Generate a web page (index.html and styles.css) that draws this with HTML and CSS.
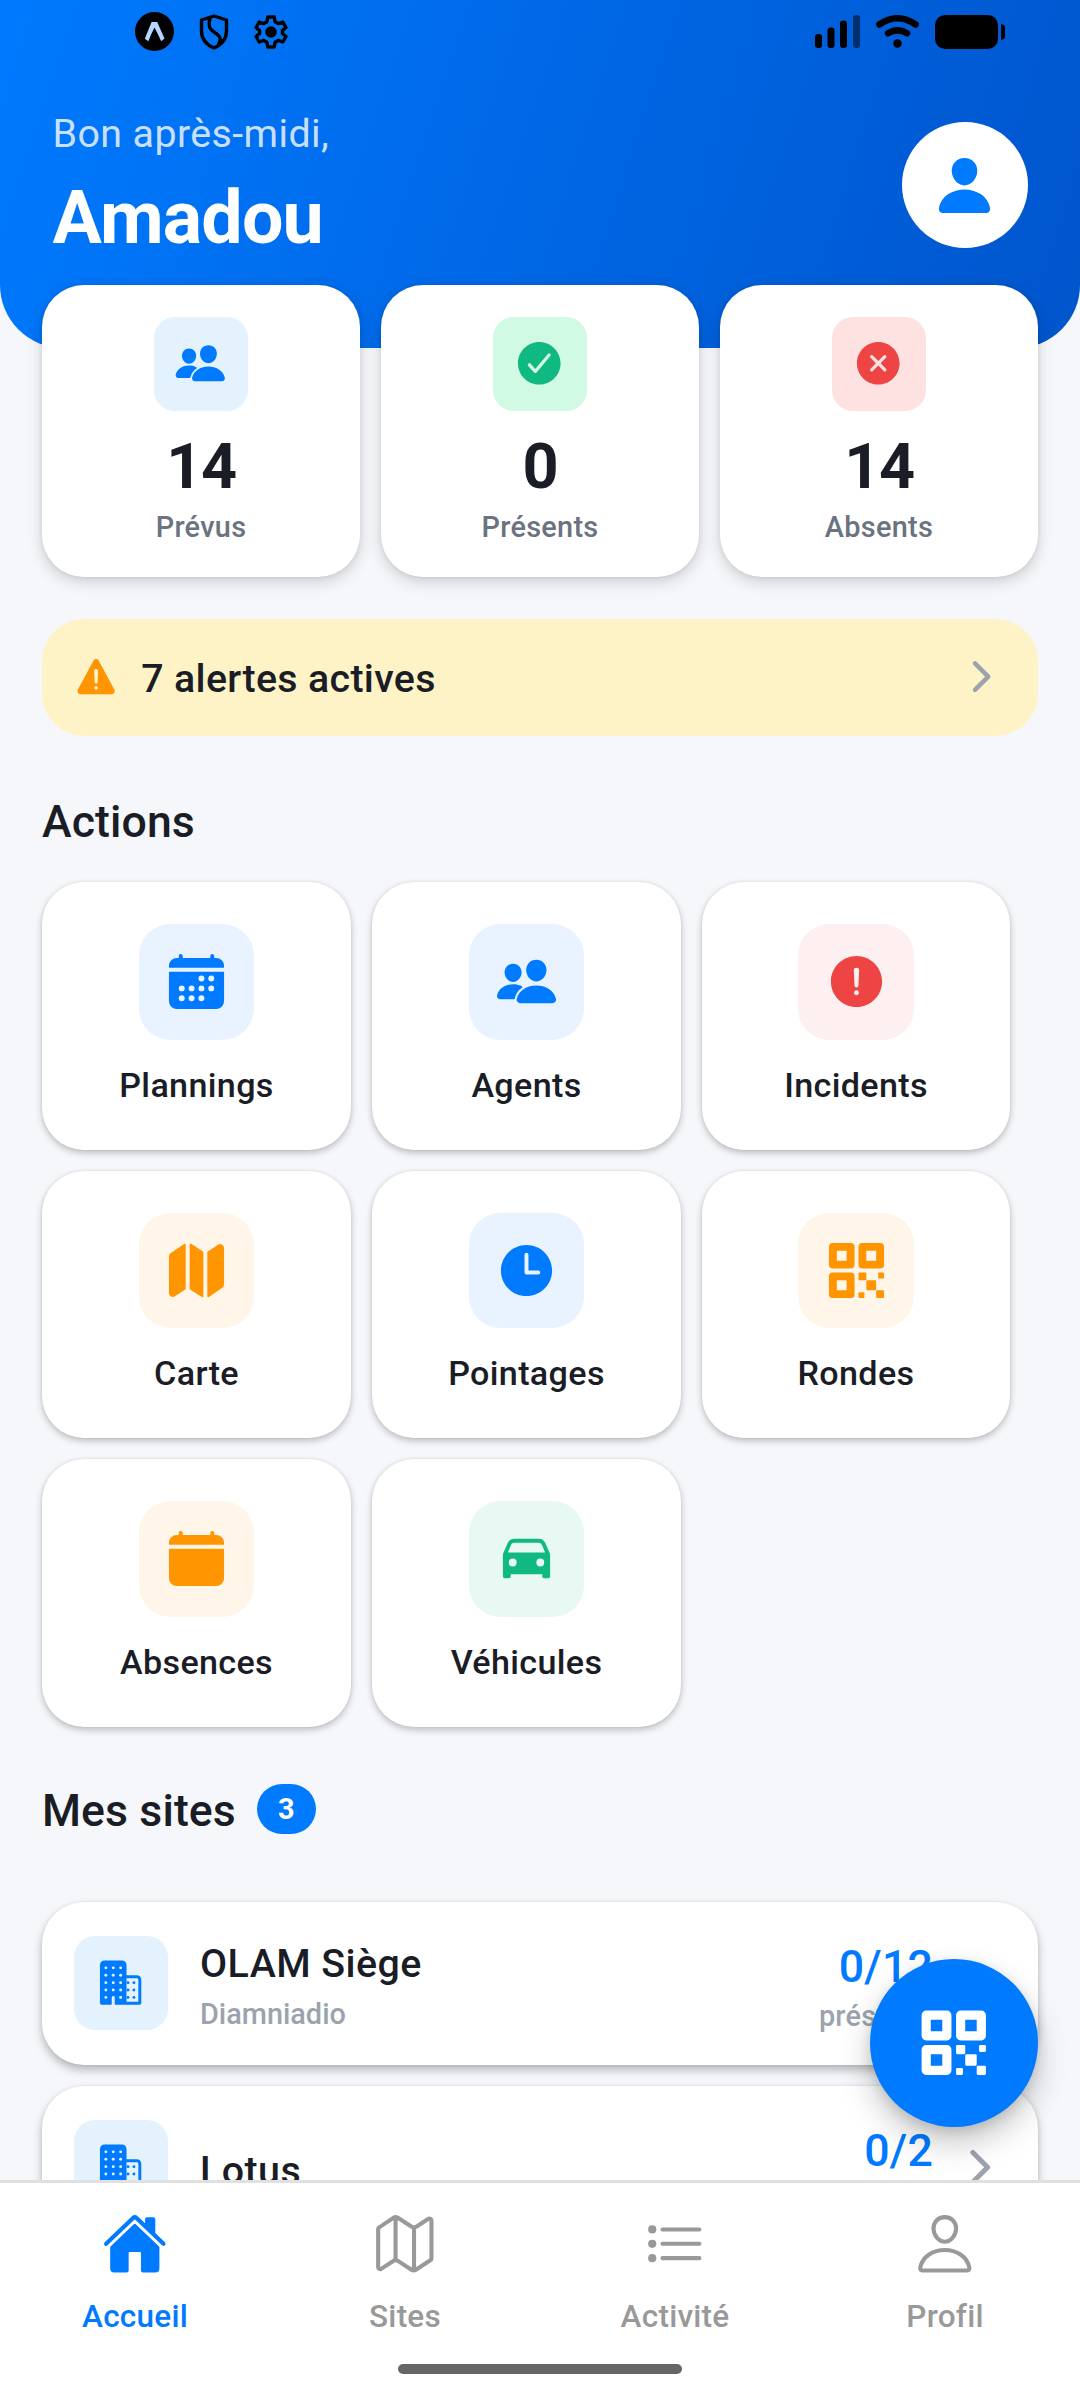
FILE: index.html
```html
<!DOCTYPE html>
<html lang="fr">
<head>
<meta charset="utf-8">
<title>Accueil</title>
<link rel="stylesheet" href="styles.css">
</head>
<body>
<svg class="sprite" aria-hidden="true">
  <symbol id="people" viewBox="0 0 512 512"><path d="M336 256c-20.56 0-40.56-9.18-56.32-25.84-15.13-16.25-24.37-37.92-26-61-1.74-24.62 5.77-47.26 21.14-63.76S312 80 336 80c23.83 0 45.38 9.06 60.7 25.52 15.47 16.62 23 39.22 21.26 63.63-1.67 23.11-10.9 44.77-26 61C376.22 246.82 356.22 256 336 256zM467.83 432H204.18a27.71 27.71 0 01-22-10.67 30.22 30.22 0 01-5.26-25.79c8.42-33.81 29.28-61.85 60.32-81.08C264.79 297.4 299.86 288 336 288c36.85 0 71 9 98.71 26.05 31.11 19.13 52 47.33 60.38 81.55a30.27 30.27 0 01-5.32 25.78A27.68 27.68 0 01467.83 432zM147 260c-35.19 0-66.13-32.72-69-72.93-1.42-20.6 5-39.65 18-53.62 12.86-13.83 31-21.45 51-21.45s38 7.66 50.93 21.57c13.1 14.08 19.5 33.09 18 53.52-2.87 40.2-33.8 72.91-68.93 72.91zM212.66 291.45c-17.59-8.6-40.42-12.9-65.65-12.9-29.46 0-58.07 7.68-80.57 21.62-25.51 15.83-42.67 38.88-49.6 66.71a27.39 27.39 0 004.79 23.36A25.32 25.32 0 0041.72 400h111a8 8 0 007.87-6.57c.11-.63.25-1.26.41-1.88 8.48-34.06 28.35-62.84 57.71-83.82a8 8 0 00-.63-13.39c-1.57-.92-3.37-1.89-5.42-2.89z"/></symbol>
  <symbol id="person" viewBox="0 0 512 512"><path d="M332.64 64.58C313.18 43.57 286 32 256 32c-30.16 0-57.43 11.5-76.8 32.38-19.58 21.11-29.12 49.8-26.88 80.78C156.76 206.28 203.27 256 256 256s99.16-49.71 103.67-110.82c2.27-30.7-7.33-59.33-27.03-80.6zM432 480H80A31 31 0 0155.8 468.87c-6.5-7.77-9.12-18.38-7.18-29.11C57.06 392.94 83.4 353.61 124.8 326c36.78-24.51 83.37-38 131.2-38s94.42 13.5 131.2 38c41.4 27.6 67.74 66.93 76.18 113.75 1.94 10.73-.68 21.34-7.18 29.11A31 31 0 01432 480z"/></symbol>
  <symbol id="check" viewBox="0 0 512 512"><path d="M256 48C141.31 48 48 141.31 48 256s93.31 208 208 208 208-93.31 208-208S370.69 48 256 48zm108.25 138.29l-134.4 160a16 16 0 01-12 5.71h-.27a16 16 0 01-11.89-5.3l-57.6-64a16 16 0 1123.78-21.4l45.29 50.32 122.59-145.91a16 16 0 0124.5 20.58z"/></symbol>
  <symbol id="close" viewBox="0 0 512 512"><path d="M256 48C141.31 48 48 141.31 48 256s93.31 208 208 208 208-93.31 208-208S370.69 48 256 48zm75.31 260.69a16 16 0 11-22.62 22.62L256 278.63l-52.69 52.68a16 16 0 01-22.62-22.62L233.37 256l-52.68-52.69a16 16 0 0122.62-22.62L256 233.37l52.69-52.68a16 16 0 0122.62 22.62L278.63 256z"/></symbol>
  <symbol id="alert" viewBox="0 0 512 512"><path d="M256 48C141.31 48 48 141.31 48 256s93.31 208 208 208 208-93.31 208-208S370.69 48 256 48zm0 319.91a20 20 0 1120-20 20 20 0 01-20 20zm21.72-201.15l-5.74 122a16 16 0 01-32 0l-5.74-121.94v-.05a21.74 21.74 0 1143.44 0z"/></symbol>
  <symbol id="warning" viewBox="0 0 512 512"><path d="M449.07,399.08,278.64,82.58c-12.08-22.44-44.26-22.44-56.35,0L51.87,399.08A32,32,0,0,0,80,446.25H420.89A32,32,0,0,0,449.07,399.08Zm-198.6-1.83a20,20,0,1,1,20-20A20,20,0,0,1,250.47,397.25ZM272.19,196.1l-5.74,122a16,16,0,0,1-32,0l-5.74-121.95v0a21.73,21.73,0,0,1,21.5-22.69h.21a21.74,21.74,0,0,1,21.73,22.7Z"/></symbol>
  <symbol id="chevron" viewBox="0 0 512 512"><path class="line bold" d="M184 112l144 144-144 144"/></symbol>
  <symbol id="calendar-clear" viewBox="0 0 512 512"><path d="M480 128a64 64 0 00-64-64h-16V48.45c0-8.61-6.62-16-15.23-16.43A16 16 0 00368 48v16H144V48.45c0-8.61-6.62-16-15.23-16.43A16 16 0 00112 48v16H96a64 64 0 00-64 64v12a4 4 0 004 4h440a4 4 0 004-4zM32 416a64 64 0 0064 64h320a64 64 0 0064-64V179a3 3 0 00-3-3H35a3 3 0 00-3 3z"/></symbol>
  <symbol id="calendar" viewBox="0 0 512 512"><use href="#calendar-clear"/><g fill="#E8F3FF"><circle cx="296" cy="232" r="24"/><circle cx="376" cy="232" r="24"/><circle cx="136" cy="312" r="24"/><circle cx="216" cy="312" r="24"/><circle cx="296" cy="312" r="24"/><circle cx="376" cy="312" r="24"/><circle cx="136" cy="392" r="24"/><circle cx="216" cy="392" r="24"/><circle cx="296" cy="392" r="24"/></g></symbol>
  <symbol id="map" viewBox="0 0 512 512"><path d="M48.17 113.34A32 32 0 0032 141.24V438a32 32 0 0047 28.37c.43-.23.85-.47 1.26-.74l84.14-55.05a8 8 0 003.63-6.72V46.45a8 8 0 00-12.51-6.63zM212.36 39.31A8 8 0 00200 46v357.56a8 8 0 003.63 6.72l96 61.9A8 8 0 00312 465.5V107.79a8 8 0 00-3.64-6.73zM464.53 46.47a31.64 31.64 0 00-31.5-.88 12.07 12.07 0 00-1.25.74l-84.15 55a8 8 0 00-3.63 6.72v357.46a8 8 0 0012.52 6.63l107.07-73.46a32 32 0 0016.41-28v-296a32.76 32.76 0 00-15.47-28.21z"/></symbol>
  <symbol id="map-outline" viewBox="0 0 512 512"><path class="line" d="M313.27 124.64L198.73 51.36a32 32 0 00-29.28.35L56.51 127.49A16 16 0 0048 141.63v295.8a16 16 0 0023.49 14.14l97.82-63.79a32 32 0 0129.5-.24l111.86 73a32 32 0 0029.27-.11l115.43-75.94a16 16 0 008.63-14.2V74.57a16 16 0 00-23.49-14.14l-98 63.86a32 32 0 01-29.24.35zM328 128v336M184 48v336"/></symbol>
  <symbol id="time" viewBox="0 0 512 512"><path d="M256 48C141.13 48 48 141.13 48 256s93.13 208 208 208 208-93.13 208-208S370.87 48 256 48zm96 240h-96a16 16 0 01-16-16V128a16 16 0 0132 0v128h80a16 16 0 010 32z"/></symbol>
  <symbol id="qr" viewBox="0 0 512 512"><rect x="336" y="336" width="80" height="80" rx="8"/><rect x="272" y="272" width="64" height="64" rx="8"/><rect x="416" y="416" width="64" height="64" rx="8"/><rect x="432" y="272" width="48" height="48" rx="8"/><rect x="272" y="432" width="48" height="48" rx="8"/><path fill-rule="evenodd" d="M304 32H448a32 32 0 0132 32V208a32 32 0 01-32 32H304a32 32 0 01-32-32V64a32 32 0 0132-32zM336 96v80h80V96zM64 32H208a32 32 0 0132 32V208a32 32 0 01-32 32H64a32 32 0 01-32-32V64a32 32 0 0132-32zM96 96v80h80V96zM64 272H208a32 32 0 0132 32V448a32 32 0 01-32 32H64a32 32 0 01-32-32V304a32 32 0 0132-32zM96 336v80h80v-80z"/></symbol>
  <symbol id="car" viewBox="0 0 512 512"><path d="M447.68 220.78a16 16 0 00-1-3.08l-37.78-88.16C400.19 109.17 379 96 354.89 96H157.11c-24.09 0-45.3 13.17-54 33.54L65.29 217.7A15.72 15.72 0 0064 224v176a16 16 0 0016 16h32a16 16 0 0016-16v-16h256v16a16 16 0 0016 16h32a16 16 0 0016-16V224a16.15 16.15 0 00-.32-3.22zM144 320a32 32 0 1132-32 32 32 0 01-32 32zm224 0a32 32 0 1132-32 32 32 0 01-32 32zM104.26 208l28.23-65.85C136.11 133.69 146 128 157.09 128h197.8c11.1 0 21 5.69 24.62 14.15L407.74 208z"/></symbol>
  <symbol id="business" viewBox="0 0 512 512"><path fill-rule="evenodd" d="M432 176H320V64a48 48 0 00-48-48H80a48 48 0 00-48 48v416a16 16 0 0016 16h104a8 8 0 008-8v-71.55c0-8.61 6.62-16 15.23-16.43A16 16 0 01192 416v72a8 8 0 008 8h264a16 16 0 0016-16V224a48 48 0 00-48-48zM320 208H432a16 16 0 0116 16V464H320z"/><g><circle cx="400" cy="256" r="16"/><circle cx="400" cy="336" r="16"/><circle cx="400" cy="416" r="16"/><circle cx="336" cy="256" r="16"/><circle cx="336" cy="336" r="16"/><circle cx="336" cy="416" r="16"/></g><g fill="#E3F2FD"><circle cx="96" cy="96" r="16"/><circle cx="176" cy="96" r="16"/><circle cx="256" cy="96" r="16"/><circle cx="96" cy="176" r="16"/><circle cx="176" cy="176" r="16"/><circle cx="256" cy="176" r="16"/><circle cx="96" cy="256" r="16"/><circle cx="176" cy="256" r="16"/><circle cx="256" cy="256" r="16"/><circle cx="96" cy="336" r="16"/><circle cx="176" cy="336" r="16"/><circle cx="256" cy="336" r="16"/><circle cx="96" cy="416" r="16"/><circle cx="256" cy="416" r="16"/></g></symbol>
  <symbol id="home" viewBox="0 0 512 512"><path d="M261.56 101.28a8 8 0 00-11.06 0L66.4 277.15a8 8 0 00-2.47 5.79L63.9 448a32 32 0 0032 32H192a16 16 0 0016-16V328a8 8 0 018-8h80a8 8 0 018 8v136a16 16 0 0016 16h96.06a32 32 0 0032-32V282.94a8 8 0 00-2.47-5.79z"/><path d="M490.91 244.15l-74.8-71.56V64a16 16 0 00-16-16h-48a16 16 0 00-16 16v32l-57.92-55.38C272.77 35.14 264.71 32 256 32c-8.68 0-16.72 3.14-22.14 8.63l-212.7 203.5c-6.22 6-7 15.87-1.34 22.37A16 16 0 0043 267.56L250.5 69.28a8 8 0 0111.06 0l207.52 198.28a16 16 0 0022.59-.44c6.14-6.36 5.63-16.86-.76-22.97z"/></symbol>
  <symbol id="list" viewBox="0 0 512 512"><path class="line" d="M160 144h288M160 256h288M160 368h288"/><circle cx="80" cy="144" r="32"/><circle cx="80" cy="256" r="32"/><circle cx="80" cy="368" r="32"/></symbol>
  <symbol id="person-outline" viewBox="0 0 512 512"><path class="line" d="M344 144c-3.92 52.87-44 96-88 96s-84.15-43.12-88-96c-4-55 35-96 88-96s92 42 88 96zM256 304c-87 0-175.3 48-191.64 138.6C62.39 453.52 68.57 464 80 464h352c11.44 0 17.62-10.48 15.65-21.4C431.3 352 343 304 256 304z"/></symbol>
</svg>

<div class="screen">
  <main class="content">
    <header class="hero">
      <div class="status">
        <div class="status-left">
          <svg width="39" height="39" viewBox="0 0 39 39"><circle cx="19.5" cy="19.5" r="19.5"/><path class="caret" d="M16.6 10h5.6l7.3 16.5-3.3 2.8q-3.6-8-6.7-13.8-3.1 5.800-6.100 13.800l-3.600-2.600z"/></svg>
          <svg width="30" height="36" viewBox="0 0 30 36"><path class="glyph" d="M15 2L27.500 6V17C27.500 25 23 30.500 15 34 7 30.500 2.500 25 2.500 17V6ZM11 4C8 16 14 17 18.500 20.500 22.500 24 21.500 26 19.500 31"/></svg>
          <svg width="34" height="34" viewBox="0 0 34 34"><path class="glyph" d="M13.800 2h6.400l.9 4.700 3.200 1.900 4.500-1.600 3.200 5.500-3.600 3.100v2.800l3.600 3.100-3.200 5.500-4.500-1.600-3.200 1.900-.9 4.700h-6.400l-.9-4.700-3.200-1.900-4.500 1.600L2 21.500l3.600-3.100v-2.800L2 12.500 5.200 7l4.500 1.600 3.200-1.900z"/><circle cx="17" cy="17" r="5.800"/></svg>
        </div>
        <div class="status-right">
          <svg width="45" height="33" viewBox="0 0 45 33"><rect y="19" width="7" height="14" rx="3"/><rect x="12.500" y="12.500" width="7" height="20.500" rx="3"/><rect x="25" y="5.500" width="7" height="27.500" rx="3"/><rect x="38" width="7" height="33" rx="3" opacity=".5"/></svg>
          <svg width="43" height="33" viewBox="0 0 43 33"><path class="wave" d="M3.300 9.500Q21.500-3 39.700 9.500M12 18.300Q21.500 12.500 31 18.300"/><circle cx="21.500" cy="28.500" r="4.200"/></svg>
          <svg width="70" height="34" viewBox="0 0 70 34"><rect width="63" height="34" rx="10"/><path d="M66 9q4 1 4 3v10q0 2-4 3z"/></svg>
        </div>
      </div>
      <div class="hello">
        <div>
          <p class="greeting">Bon après-midi,</p>
          <h1 class="name">Amadou</h1>
        </div>
        <div class="avatar"><svg class="i24"><use href="#person"/></svg></div>
      </div>
    </header>

    <section class="stats">
      <div class="card stat"><div class="tile sky"><svg class="i20"><use href="#people"/></svg></div><b>14</b><span>Prévus</span></div>
      <div class="card stat"><div class="tile mint"><svg class="i20"><use href="#check"/></svg></div><b>0</b><span>Présents</span></div>
      <div class="card stat"><div class="tile rose"><svg class="i20"><use href="#close"/></svg></div><b>14</b><span>Absents</span></div>
    </section>

    <div class="alerts"><svg class="i18"><use href="#warning"/></svg><span>7 alertes actives</span><svg class="i18 muted"><use href="#chevron"/></svg></div>

    <h2 class="title">Actions</h2>
    <section class="actions">
      <div class="card action"><div class="tile big blue"><svg class="i24"><use href="#calendar"/></svg></div><span>Plannings</span></div>
      <div class="card action"><div class="tile big blue"><svg class="i24"><use href="#people"/></svg></div><span>Agents</span></div>
      <div class="card action"><div class="tile big red"><svg class="i24"><use href="#alert"/></svg></div><span>Incidents</span></div>
      <div class="card action"><div class="tile big orange"><svg class="i24"><use href="#map"/></svg></div><span>Carte</span></div>
      <div class="card action"><div class="tile big blue"><svg class="i24"><use href="#time"/></svg></div><span>Pointages</span></div>
      <div class="card action"><div class="tile big orange"><svg class="i24"><use href="#qr"/></svg></div><span>Rondes</span></div>
      <div class="card action"><div class="tile big orange"><svg class="i24"><use href="#calendar-clear"/></svg></div><span>Absences</span></div>
      <div class="card action"><div class="tile big green"><svg class="i24"><use href="#car"/></svg></div><span>Véhicules</span></div>
    </section>

    <div class="sites-head"><h2 class="title">Mes sites</h2><span class="badge">3</span></div>
    <section class="sites">
      <div class="card site">
        <div class="tile sky"><svg class="i18"><use href="#business"/></svg></div>
        <div class="site-text"><strong>OLAM Siège</strong><span>Diamniadio</span></div>
        <div class="site-count"><strong>0/12</strong><span>présents</span></div>
        <svg class="i20 muted"><use href="#chevron"/></svg>
      </div>
      <div class="card site">
        <div class="tile sky"><svg class="i18"><use href="#business"/></svg></div>
        <div class="site-text"><strong>Lotus</strong></div>
        <div class="site-count"><strong>0/2</strong></div>
        <svg class="i20 muted"><use href="#chevron"/></svg>
      </div>
    </section>
  </main>

  <nav class="tabs">
    <div class="tab active"><svg class="i25"><use href="#home"/></svg><span>Accueil</span></div>
    <div class="tab"><svg class="i25"><use href="#map-outline"/></svg><span>Sites</span></div>
    <div class="tab"><svg class="i25"><use href="#list"/></svg><span>Activité</span></div>
    <div class="tab"><svg class="i25"><use href="#person-outline"/></svg><span>Profil</span></div>
    <div class="home-bar"></div>
  </nav>
  <div class="fab"><svg class="i28"><use href="#qr"/></svg></div>
</div>
</body>
</html>
```
FILE: styles.css
```css
* { box-sizing: border-box; margin: 0; padding: 0; }
body { font-family: Roboto, "Noto Sans", sans-serif; color: #1a1d26; background: #f5f7fb; }
svg { display: block; flex: none; fill: currentColor; }
.sprite { position: absolute; width: 0; height: 0; }
.line { fill: none; stroke: currentColor; stroke-width: 32; stroke-linecap: round; stroke-linejoin: round; }
.bold { stroke-width: 48; }
.i18 { width: 47.25px; height: 47.25px; }
.i20 { width: 52.5px; height: 52.5px; }
.i24 { width: 63px; height: 63px; }
.i25 { width: 65.6px; height: 65.6px; }
.i28 { width: 73.5px; height: 73.5px; }
.muted { color: #9ca3af; }

.screen { position: relative; width: 1080px; height: 2400px; overflow: hidden; display: flex; flex-direction: column; }
.content { flex: 1; min-height: 0; overflow: hidden; }

.hero { height: 348px; border-radius: 0 0 63px 63px; background: linear-gradient(107.9deg, #007aff, #0055cc); }
.status { height: 63px; display: flex; justify-content: space-between; align-items: center; padding: 0 75px 0 135px; color: #000; }
.status-left { display: flex; align-items: center; gap: 25px; }
.status-right { display: flex; align-items: center; gap: 16px; }
.caret { fill: #b5d6ff; }
.glyph { fill: none; stroke: #000; stroke-width: 3.4; stroke-linejoin: round; }
.wave { fill: none; stroke: #000; stroke-width: 6.5; stroke-linecap: round; }
.hello { display: flex; justify-content: space-between; align-items: center; height: 244px; padding: 0 52.5px; }
.greeting { font-size: 39.375px; line-height: 53px; letter-spacing: .4px; color: rgba(255,255,255,.8); }
.name { font-size: 73.5px; line-height: 98px; font-weight: 700; letter-spacing: -.8px; color: #fff; margin-top: 9px; }
.hello > div:first-child { padding-top: 4px; }
.avatar { width: 126px; height: 126px; border-radius: 50%; background: #fff; color: #007aff; display: grid; place-items: center; }

.card { background: #fff; border-radius: 42px; box-shadow: 0 3px 7px rgba(0,0,0,.23), 0 0 3px rgba(0,0,0,.08); }
.tile { width: 94.5px; height: 94.5px; border-radius: 21px; display: grid; place-items: center; flex: none; }
.big { width: 115.5px; height: 115.5px; border-radius: 31.5px; }
.sky { background: #e3f2fd; color: #007aff; }
.mint { background: #d1fae5; color: #10b981; }
.rose { background: #fee2e2; color: #ef4444; }
.blue { background: #e8f3ff; color: #007aff; }
.red { background: #feeff0; color: #ef4444; }
.orange { background: #fff5e8; color: #ff9500; }
.green { background: #e8f8f3; color: #10b981; }

.stats { position: relative; display: grid; grid-template-columns: repeat(3, 1fr); gap: 21px; padding: 0 42px; margin-top: -63px; }
.stat { height: 292px; padding-top: 31.5px; display: flex; flex-direction: column; align-items: center; box-shadow: 0 5px 16px rgba(0,0,0,.16), 0 1px 5px rgba(0,0,0,.08); }
.stat .tile { padding: 0 1px 2px 0; }
.stat b { font-size: 63px; line-height: 74px; letter-spacing: -1.3px; margin-top: 19px; }
.stat span { font-size: 28.875px; line-height: 34px; letter-spacing: .3px; font-weight: 500; color: #6b7280; margin-top: 6px; }

.alerts { margin: 42px 42px 0; height: 117px; border-radius: 42px; padding: 0 32.5px 0 30.5px; background: #fef3c7; display: flex; align-items: center; gap: 21.500px; color: #ff9500; }
.alerts svg { margin-bottom: 1px; }
.alerts span { flex: 1; font-size: 39.375px; font-weight: 550; letter-spacing: .32px; padding-top: 2px; color: #1a1d26; }
.alerts .muted { color: #9ca3af; }

.title { font-size: 44.625px; line-height: 52px; font-weight: 550; letter-spacing: .1px; }
.content > .title { margin: 60px 42px 0; }
.actions { display: grid; grid-template-columns: 309px 309px 308px; gap: 21px; padding: 0 42px; margin-top: 34px; }
.action { height: 267.6px; padding-top: 42px; display: flex; flex-direction: column; align-items: center; }
.action span { font-size: 34.125px; line-height: 40px; letter-spacing: .35px; font-weight: 500; margin-top: 25px; }

.sites-head { display: flex; align-items: center; gap: 21px; padding: 0 42px; margin-top: 57px; }
.sites-head .title { padding-top: 1px; }
.badge { width: 59px; height: 50px; border-radius: 25px; background: #007aff; color: #fff; font-size: 28.875px; font-weight: 700; display: grid; place-items: center; margin-bottom: 2px; }
.sites { display: grid; gap: 21px; padding: 0 42px; margin-top: 65px; }
.site { height: 163px; padding: 0 31.5px; display: flex; align-items: center; box-shadow: 0 5px 10px rgba(0,0,0,.27), 0 0 3px rgba(0,0,0,.08); }
.site .tile { padding-bottom: 1px; margin-bottom: 1px; }
.site strong, .site span { display: block; font-weight: 500; }
.site-text { flex: 1; margin-left: 32px; padding-top: 4px; }
.site-text:not(:has(span)) { padding-top: 7px; }
.site .site-text strong { font-size: 39.375px; line-height: 52px; font-weight: 550; letter-spacing: .45px; }
.site span { font-size: 28.875px; line-height: 38px; color: #9ca3af; margin-top: 5px; }
.site-count { text-align: right; margin-right: 21px; align-self: flex-start; padding-top: 36px; }
.site .site-count strong { font-size: 44.625px; line-height: 58px; font-weight: 550; letter-spacing: .2px; color: #007aff; }
.site .site-count span { margin-top: 1px; letter-spacing: .2px; }

.tabs { position: relative; height: 220px; border-top: 3px solid #e0e0e0; background: #fff; display: grid; grid-template-columns: repeat(4, 270px); color: #999; }
.tab { padding-top: 28px; display: flex; flex-direction: column; align-items: center; }
.tab span { font-size: 31.5px; line-height: 38px; font-weight: 550; letter-spacing: .25px; margin-top: 21.500px; }
.active { color: #007aff; }
.home-bar { position: absolute; left: 398px; top: 181px; width: 284px; height: 10px; border-radius: 5px; background: #666; }
.fab { position: absolute; right: 42px; top: 1959px; width: 168px; height: 168px; border-radius: 50%; background: #007aff; color: #fff; display: grid; place-items: center; box-shadow: 0 16px 32px rgba(0,0,0,.22), 0 4px 12px rgba(0,0,0,.12); }
```
